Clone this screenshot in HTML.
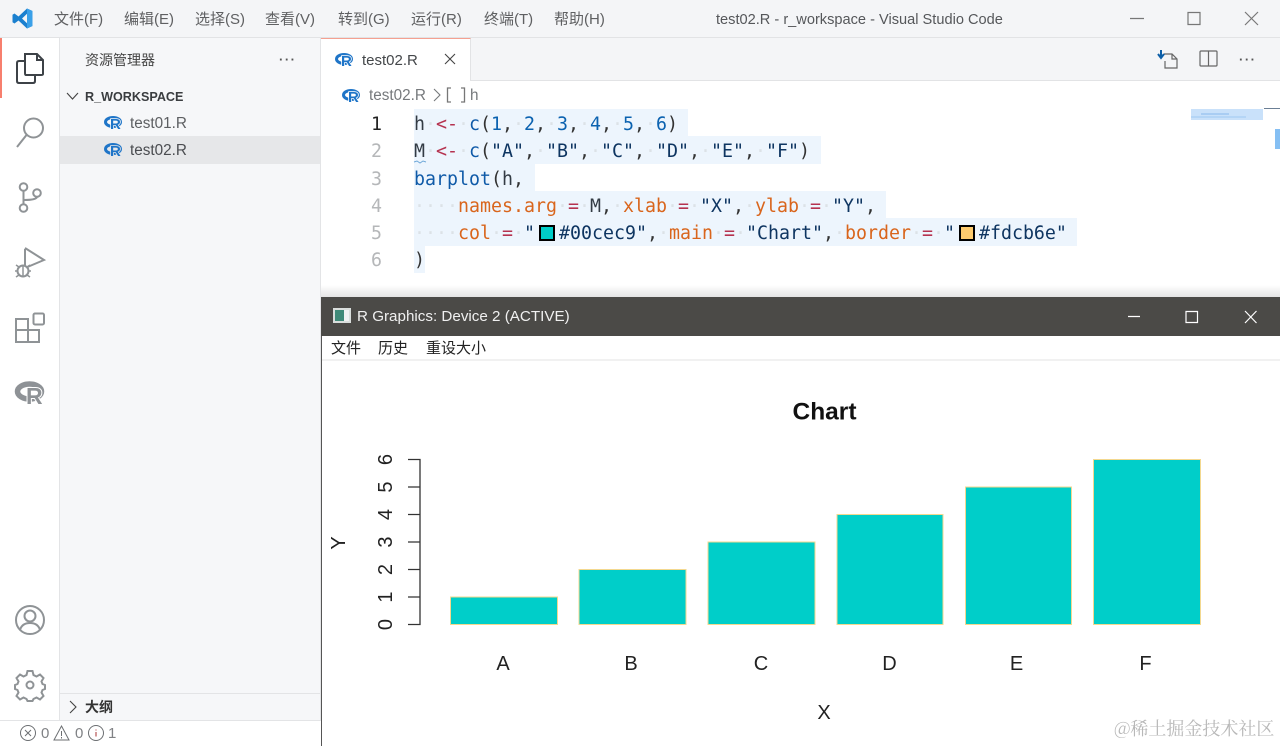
<!DOCTYPE html>
<html lang="zh"><head><meta charset="utf-8"><title>test02.R - r_workspace - Visual Studio Code</title>
<style>
*{box-sizing:border-box}
html,body{margin:0;padding:0;width:1280px;height:746px;overflow:hidden;background:#fff;font-family:"Liberation Sans","Noto Sans CJK SC",sans-serif}
.a{position:absolute;white-space:pre}
.m{top:10px;font-size:15px;color:#5f6062;line-height:20px}
.hl{position:absolute;left:414px;background:#edf5fd}
.code{position:absolute;left:414px;font:18.27px/27.3px "DejaVu Sans Mono",monospace;white-space:pre;color:#333;margin:0}
.d{color:#dce2e7}.k{color:#b5324f}.f{color:#0f5aa8}.n{color:#0b62b0}.p{color:#d9651c}.s{color:#0e3561}.v{color:#333b44}
.sw{display:inline-block;width:16px;height:16px;border:2px solid #000;margin:0 4px;vertical-align:-2px}
.g{font:20px "Liberation Sans",sans-serif;fill:#222}
svg{position:absolute;overflow:visible}
.rr{font:700 15px "Liberation Sans",sans-serif;fill:#1f75c8;paint-order:stroke;stroke-width:1.5px}
</style></head><body>
<!-- title bar -->
<div class="a" style="left:0;top:0;width:1280px;height:38px;background:#f4f5f7;border-bottom:1px solid #e2e3e5"></div>
<svg style="left:12px;top:8px" width="21" height="21" viewBox="0 0 21 21"><path d="M15 0.5 20.5 3V18L15 20.5 6.5 12.5 2.5 15.5 0.5 14.3V6.7L2.5 5.5 6.5 8.5ZM15 5.7 10 10.5 15 15.3Z" fill="#1b80cf"/><path d="M15 .5 20.5 3V18L15 20.5V15.3 5.7Z" fill="#3aa0e8"/></svg>
<div class="a m" style="left:54px">文件(F)</div><div class="a m" style="left:124px">编辑(E)</div><div class="a m" style="left:195px">选择(S)</div><div class="a m" style="left:265px">查看(V)</div><div class="a m" style="left:338px">转到(G)</div><div class="a m" style="left:411px">运行(R)</div><div class="a m" style="left:484px">终端(T)</div><div class="a m" style="left:554px">帮助(H)</div>
<div class="a m" style="left:716px;font-size:14.6px;color:#55575a">test02.R - r_workspace - Visual Studio Code</div>
<svg style="left:1130px;top:10px" width="135" height="18" fill="none" stroke="#777" stroke-width="1.2"><path d="M0 8.5H14M58 2.5H70V14.5H58ZM115 2 128 15M128 2 115 15"/></svg>
<!-- activity bar -->
<div class="a" style="left:0;top:38px;width:60px;height:682px;background:#fff;border-right:1px solid #e3e4e6"></div>
<div class="a" style="left:0;top:38px;width:2px;height:60px;background:#f77f6e"></div>
<svg style="left:0;top:38px" width="60" height="360" fill="none" stroke="#8f9396" stroke-width="2">
<path stroke="#3d4247" d="M25 16H37L43 22V36Q43 37 41 37H26Q25 37 25 35ZM37 16V22H43M25 23H19Q17 23 17 25V43Q17 45 19 45H33Q35 45 35 43V37"/>
<circle cx="33.500" cy="90" r="9.500"/><path d="M26.500 97 17 109"/>
<circle cx="23.500" cy="149" r="3.800"/><circle cx="23.500" cy="170" r="3.800"/><circle cx="37" cy="155" r="3.800"/><path d="M23.500 153V166M37 159Q36 162 24 162"/>
<path d="M25 211V230L44 222 25 210"/><circle cx="23" cy="233" r="5.500" fill="#fff"/><path stroke-width="1.500" d="M16 227 19 229M30 227 27 229M15 233H18M28 233H31M16 239 19 237M30 239 27 237M23 228V238"/>
<path d="M16 281H28V292H39V304H16ZM16 292H28V304" stroke-width="2"/><rect x="33.500" y="275.500" width="10.500" height="11" rx="1.500" stroke-width="2"/>
</svg>
<svg style="left:14px;top:378px" width="34" height="30"><ellipse cx="15.500" cy="13.500" rx="12" ry="7.500" fill="none" stroke="#8e9296" stroke-width="5.500"/><text x="12" y="26" font-family="Liberation Sans" font-weight="700" font-size="23" fill="#8e9296" stroke="#fff" stroke-width="2" style="paint-order:stroke">R</text></svg>
<svg style="left:14px;top:604px" width="34" height="100" fill="none" stroke="#8f9396" stroke-width="2"><circle cx="16" cy="16" r="14"/><circle cx="16" cy="12" r="5.500"/><path d="M6 26Q8 19 16 19 24 19 26 26"/><circle cx="16" cy="81" r="3.500"/><path d="M13.500 67H18.500L19.500 71 22.500 72.500 26 70.500 29.500 74 27.500 77.500 28.500 80 31 81V85L28.500 86 27.500 88.500 29.500 92 26 95.500 22.500 93.500 19.500 95 18.500 97H13.500L12.500 95 9.500 93.500 6 95.500 2.500 92 4.500 88.500 3.500 86 1 85V81L3.500 80 4.500 77.500 2.500 74 6 70.500 9.500 72.500 12.500 71Z"/></svg>
<!-- sidebar -->
<div class="a" style="left:60px;top:38px;width:261px;height:682px;background:#f6f7f9;border-right:1px solid #e3e4e6"></div>
<div class="a" style="left:85px;top:50px;font-size:14px;line-height:20px;color:#444">资源管理器</div>
<div class="a" style="left:279px;top:53px;font-size:13px;line-height:14px;color:#555;letter-spacing:1.500px;font-weight:700">···</div>
<svg style="left:66px;top:91px" width="14" height="10" fill="none" stroke="#444" stroke-width="1.100"><path d="M1 2 6.500 8 12 2"/></svg>
<div class="a" style="left:85px;top:88px;font-size:12.600px;line-height:18px;font-weight:700;color:#3a3d40">R_WORKSPACE</div>
<div class="a" style="left:60px;top:136px;width:260px;height:28px;background:#e6e7e9"></div>
<svg style="left:104px;top:114px" width="20" height="44"><ellipse cx="9" cy="8" rx="7.500" ry="4.500" fill="none" stroke="#1f75c8" stroke-width="3"/><text class="rr" x="6" y="15" stroke="#f6f7f9">R</text><ellipse cx="9" cy="35" rx="7.500" ry="4.500" fill="none" stroke="#1f75c8" stroke-width="3"/><text class="rr" x="6" y="42" stroke="#e6e7e9">R</text></svg>
<div class="a" style="left:130px;top:115px;font-size:15.300px;line-height:18px;color:#5d5f62">test01.R</div>
<div class="a" style="left:130px;top:142px;font-size:15.300px;line-height:18px;color:#4a4c50">test02.R</div>
<div class="a" style="left:60px;top:693px;width:260px;height:1px;background:#e3e4e6"></div>
<svg style="left:68px;top:700px" width="10" height="14" fill="none" stroke="#444" stroke-width="1.100"><path d="M2 1 8 7 2 13"/></svg>
<div class="a" style="left:85px;top:698px;font-size:14px;line-height:18px;font-weight:700;color:#333">大纲</div>
<!-- status -->
<div class="a" style="left:0;top:720px;width:321px;height:26px;background:#fff;border-top:1px solid #e3e4e6"></div>
<svg style="left:20px;top:725px" width="100" height="16" fill="none" stroke="#6c6f72" stroke-width="1"><circle cx="8" cy="8" r="7.500"/><path d="M5 5 11 11M11 5 5 11M41.500 1 49 15H34ZM41.500 6V11M41.500 12V13.500"/><circle cx="76" cy="8" r="7.500"/><path d="M76 4.500V5.500M76 7V11.500" stroke="#a33"/></svg>
<div class="a" style="left:41px;top:725px;font-size:15px;line-height:17px;color:#808285">0</div><div class="a" style="left:75px;top:725px;font-size:15px;line-height:17px;color:#808285">0</div><div class="a" style="left:108px;top:725px;font-size:15px;line-height:17px;color:#808285">1</div>
<!-- tabs -->
<div class="a" style="left:321px;top:38px;width:959px;height:43px;background:#f4f5f7;border-bottom:1px solid #e2e3e5"></div>
<div class="a" style="left:321px;top:38px;width:150px;height:43px;background:#fff;border-top:1px solid #f5a091;border-right:1px solid #e2e3e5"></div>
<svg style="left:335px;top:51px" width="20" height="18"><ellipse cx="9" cy="8" rx="7.500" ry="4.500" fill="none" stroke="#1f75c8" stroke-width="3"/><text class="rr" x="6" y="15" stroke="#fff">R</text></svg>
<div class="a" style="left:362px;top:52px;font-size:15px;line-height:18px;color:#44474a">test02.R</div>
<svg style="left:444px;top:53px" width="12" height="12" fill="none" stroke="#444" stroke-width="1.100"><path d="M1 1 11 11M11 1 1 11"/></svg>
<svg style="left:1158px;top:50px" width="100" height="20" fill="none" stroke="#666" stroke-width="1.200"><path d="M6 4H14L19 9V18H7V11M14 4V9H19"/><path d="M3 0V7M0 4 3 8 6 4" stroke="#0d5fa8" stroke-width="2"/><path d="M43 1H58Q59 1 59 2V15Q59 16 58 16H43Q42 16 42 15V2Q42 1 43 1ZM50.500 1V16"/></svg>
<div class="a" style="left:1239px;top:53px;font-size:13px;line-height:14px;color:#555;letter-spacing:1.500px;font-weight:700">···</div>
<!-- breadcrumb -->
<svg style="left:342px;top:87px" width="20" height="18"><ellipse cx="9" cy="8" rx="7.500" ry="4.500" fill="none" stroke="#1f75c8" stroke-width="3"/><text class="rr" x="6" y="15" stroke="#fff">R</text></svg>
<div class="a" style="left:369px;top:87px;font-size:15.300px;line-height:18px;color:#76797c">test02.R</div>
<svg style="left:432px;top:88px" width="10" height="14" fill="none" stroke="#76797c" stroke-width="1.100"><path d="M2 1 8 7 2 13"/></svg>
<svg style="left:446px;top:87px" width="22" height="16" fill="none" stroke="#777" stroke-width="1.300"><path d="M5 1H1.500V15H5M15 1H18.500V15H15"/></svg>
<div class="a" style="left:470px;top:87px;font-size:15.300px;line-height:18px;color:#76797c">h</div>
<!-- editor -->
<div class="hl" style="top:109px;width:274px;height:27px"></div><div class="hl" style="top:136px;width:407px;height:28px"></div><div class="hl" style="top:164px;width:121px;height:27px"></div><div class="hl" style="top:191px;width:472px;height:27px"></div><div class="hl" style="top:218px;width:663px;height:28px"></div><div class="hl" style="top:246px;width:11px;height:27px"></div>
<pre class="code" style="left:371px;top:111px;color:#b5b7b9"><span style="color:#222">1</span>
2
3
4
5
6</pre>
<pre class="code" style="top:111px"><span class="v">h</span><span class="d">·</span><span class="k">&lt;-</span><span class="d">·</span><span class="f">c</span>(<span class="n">1</span>,<span class="d">·</span><span class="n">2</span>,<span class="d">·</span><span class="n">3</span>,<span class="d">·</span><span class="n">4</span>,<span class="d">·</span><span class="n">5</span>,<span class="d">·</span><span class="n">6</span>)
<span class="v">M</span><span class="d">·</span><span class="k">&lt;-</span><span class="d">·</span><span class="f">c</span>(<span class="s">"A"</span>,<span class="d">·</span><span class="s">"B"</span>,<span class="d">·</span><span class="s">"C"</span>,<span class="d">·</span><span class="s">"D"</span>,<span class="d">·</span><span class="s">"E"</span>,<span class="d">·</span><span class="s">"F"</span>)
<span class="f">barplot</span>(<span class="v">h</span>,
<span class="d">····</span><span class="p">names.arg</span><span class="d">·</span><span class="k">=</span><span class="d">·</span><span class="v">M</span>,<span class="d">·</span><span class="p">xlab</span><span class="d">·</span><span class="k">=</span><span class="d">·</span><span class="s">"X"</span>,<span class="d">·</span><span class="p">ylab</span><span class="d">·</span><span class="k">=</span><span class="d">·</span><span class="s">"Y"</span>,
<span class="d">····</span><span class="p">col</span><span class="d">·</span><span class="k">=</span><span class="d">·</span><span class="s">"<i class="sw" style="background:#00cec9"></i>#00cec9"</span>,<span class="d">·</span><span class="p">main</span><span class="d">·</span><span class="k">=</span><span class="d">·</span><span class="s">"Chart"</span>,<span class="d">·</span><span class="p">border</span><span class="d">·</span><span class="k">=</span><span class="d">·</span><span class="s">"<i class="sw" style="background:#fdcb6e"></i>#fdcb6e"</span>
)</pre>
<svg style="left:414px;top:160px" width="12" height="4" fill="none" stroke="#6fa8d8"><path d="M0 2 3 1 6 3 9 1 12 2"/></svg>
<!-- minimap -->
<div class="a" style="left:1191px;top:109px;width:72px;height:11px;background:#c9e1fa"></div>
<div class="a" style="left:1201px;top:113px;width:28px;height:2px;background:#a9cdf3"></div>
<div class="a" style="left:1191px;top:116px;width:55px;height:2px;background:#b4d5f6"></div>
<div class="a" style="left:1264px;top:108px;width:16px;height:1px;background:#6b7f95"></div>
<div class="a" style="left:1275px;top:129px;width:5px;height:20px;background:#85bff3"></div>
<!-- R graphics window -->
<div class="a" style="left:321px;top:285px;width:959px;height:12px;background:linear-gradient(#fff,#e4e4e4)"></div>
<div class="a" style="left:321px;top:297px;width:959px;height:449px;background:#fff;border-left:1px solid #555"></div>
<div class="a" style="left:321px;top:297px;width:959px;height:39px;background:#4b4a47"></div>
<svg style="left:333px;top:308px" width="18" height="15"><rect width="18" height="15" fill="#d9dedc"/><rect x="2" y="2" width="9" height="11" fill="#3f8a78"/><rect x="11" y="2" width="5" height="11" fill="#f0f2f2"/></svg>
<div class="a" style="left:357px;top:308px;font-size:15.200px;line-height:18px;color:#f0f0f0">R Graphics: Device 2 (ACTIVE)</div>
<svg style="left:1128px;top:310px" width="132" height="14" fill="none" stroke="#fff" stroke-width="1.200"><path d="M0 6.500H12M58 1.500H69.500V12.500H58ZM117 1 128.500 13M128.500 1 117 13"/></svg>
<div class="a" style="left:331px;top:340px;font-size:15px;line-height:18px;color:#222">文件</div><div class="a" style="left:378px;top:340px;font-size:15px;line-height:18px;color:#222">历史</div><div class="a" style="left:426px;top:340px;font-size:15px;line-height:18px;color:#222">重设大小</div>
<div class="a" style="left:322px;top:359px;width:958px;height:2px;background:#f1f1f1"></div>
<svg style="left:0;top:0" width="1280" height="746">
<text x="824.500" y="419.500" text-anchor="middle" font-family="Liberation Sans" font-weight="700" font-size="24.500" fill="#111">Chart</text>
<g fill="#00cec9" stroke="#f3d88f" stroke-width="1"><rect x="450.500" y="597" width="107" height="27.500"/><rect x="579" y="569.500" width="107" height="55"/><rect x="708" y="542" width="107" height="82.500"/><rect x="837" y="514.500" width="106" height="110"/><rect x="965.500" y="487" width="106" height="137.500"/><rect x="1093.500" y="459.500" width="107" height="165"/></g>
<path d="M408 459.500H420V624.500H408M408 487H420M408 514.500H420M408 542H420M408 569.500H420M408 597H420" fill="none" stroke="#333" stroke-width="1.300"/>
<g class="g" text-anchor="middle"><text x="503" y="670">A</text><text x="631" y="670">B</text><text x="761" y="670">C</text><text x="889.500" y="670">D</text><text x="1016.500" y="670">E</text><text x="1145.500" y="670">F</text><text x="824" y="719">X</text>
<text transform="translate(392 624.500) rotate(-90)">0</text><text transform="translate(392 597) rotate(-90)">1</text><text transform="translate(392 569.500) rotate(-90)">2</text><text transform="translate(392 542) rotate(-90)">3</text><text transform="translate(392 514.500) rotate(-90)">4</text><text transform="translate(392 487) rotate(-90)">5</text><text transform="translate(392 459.500) rotate(-90)">6</text><text transform="translate(345 543) rotate(-90)">Y</text></g>
</svg>
<div class="a" style="left:1114px;top:717px;font-size:18px;line-height:22px;color:#b8b8b8;font-family:'Noto Serif CJK SC','Liberation Sans',serif">@稀土掘金技术社区</div>
</body></html>
